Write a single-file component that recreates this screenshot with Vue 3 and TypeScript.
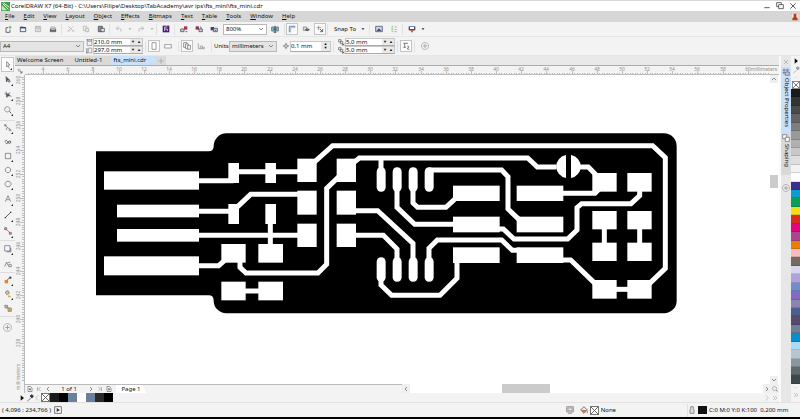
<script setup lang="ts">
import { h, ref, type FunctionalComponent } from 'vue'

type Shape = [d: string, stroke?: string, fill?: string]

const ink = '#4a4e58'
const soft = '#b4b4b4'

const icons: Record<string, Shape[]> = {
  logo: [['M0 0H12V12H0Z', 'none', '#43a047'], ['M2 2L10 10M3 1L11 7', '#fff'], ['M1 4L8 11H1Z', 'none', '#c8e6c9']],
  new: [['M3 4V11H9V7', ink], ['M3 4H6', ink], ['M9 1V6M6.500 3.500H11.500', '#4caf50']],
  open: [['M2 3H6L7 4H10V10H2Z', '#39406b'], ['M2 3H10V5H2Z', 'none', '#39406b']],
  save: [['M2 2H10V10H2Z', soft, '#ddd'], ['M4 2V5H8V2', soft]],
  print: [['M2 6H10V10H2Z', ink], ['M3 6V3H9V6', '#999'], ['M2 8.500H10', '#222']],
  cut: [['M2 2L9 9M9 2L2 9', soft], ['M1 9H4M8 9H11', soft]],
  copy: [['M2 2H7V8H2Z', soft], ['M5 5H10V10H5Z', soft, '#e6e6e6']],
  paste: [['M2 2H8V10H2Z', ink, '#8d8f96'], ['M6 5H11V10H6Z', ink, '#eee']],
  undo: [['M5 2L2 5L5 8M2 5H7Q10 5 9 10', soft]],
  redo: [['M7 2L10 5L7 8M10 5H5Q2 5 3 10', soft]],
  caret: [['M3 4.500H9L6 8Z', 'none', '#333']],
  caretSoft: [['M3 4.500H9L6 8Z', 'none', '#aaa']],
  search: [['M1 1H11V11H1Z', 'none', '#4a1f6e'], ['M4 3H8M4 6H8V9M4 3V9', '#e8dcf2']],
  importIcon: [['M6 2H11V7H6Z', 'none', '#b03050'], ['M1 6H6V10H1Z', ink, '#d3d6e8'], ['M8 10H11', ink]],
  exportIcon: [['M1 2H6V7H1Z', 'none', '#8b3550'], ['M6 6H11V10H6Z', ink, '#d3d6e8'], ['M8 3H9V6', ink]],
  publish: [['M1 3H6V8H1Z', 'none', '#39406b'], ['M5 5H11V10H5Z', ink, '#c9cde0'], ['M7 7L9 9', ink]],
  fullscreen: [['M1 3H11V9H1Z', '#567', '#9fbcc8'], ['M6 1V11M3 6H9', '#245'], ['M4 11H8', '#245']],
  rulers: [['M2 11V2H11', '#3b6aa0'], ['M4 11V4H11', '#9aabc0']],
  grid: [['M2 3H7V8H2Z', '#888', '#ddd'], ['M5 7Q8 4 11 7Q8 10 5 7Z', ink, '#777']],
  guides: [['M4 1V8M1 4H8', '#888'], ['M6 6L10 10M10 6V10H6', ink]],
  welcome: [['M1 2H11V10H1Z', '#556', '#cfd4e8'], ['M2 9L6 5L10 9Z', 'none', '#445078']],
  options: [['M3 2V10M3 2H5M3 6H5M3 10H5', '#7c8'], ['M7 3H10M7 7H10M7 10H10', '#999']],
  launcher: [['M1 2H11V8H1Z', 'none', '#3c5176'], ['M3 3H9V6H3Z', 'none', '#fff'], ['M4 8H8L6 11Z', '#d64b28', '#d64b28']],
  width: [['M2 4H10V11H2Z', '#888'], ['M2 1.500H10M2 0V3M10 0V3', ink]],
  height: [['M4 2H10V10H4Z', '#888'], ['M1.500 2V10M0 10H3', ink]],
  portrait: [['M3 1H9V11H3Z', '#888', '#fff']],
  landscape: [['M1 4H11V9H1Z', '#888', '#fff']],
  pages: [['M1 1H6V8H1Z', '#777'], ['M4 3H8V10H4Z', '#777', '#fff'], ['M7 5H11V11H7Z', '#777', '#fff']],
  onePage: [['M2 2V10H5M5 6H8V10H5ZM8 8H11V10H8Z', '#999']],
  nudge: [['M6 1L8 4H4ZM6 11L8 8H4ZM1 6L4 4V8ZM11 6L8 4V8Z', 'none', '#777'], ['M4 6H8', '#777']],
  dupX: [['M1 1H5V5H1ZM4 4H8V8H4Z', '#666'], ['M7 8L11 11M11 8L7 11', '#333']],
  treat: [['M2 2H9M4 2V8M2 8H6', '#666'], ['M8 6Q12 6 9 9Q6 11 11 11', '#666']],
  plus: [['M6 .700A5.300 5.300 0 1 1 5.900 .700Z', '#aaa'], ['M6 3V9M3 6H9', '#999']],
  plain: [['M6 2V10M2 6H10', '#aaa']],
  pick: [['M4 1V9L6 7L8 11M4 1L9 6H6', '#777', '#f4f4f4']],
  shape: [['M3 1L8 6H5L4 9Z', ink, ink], ['M7 7H9V9H7Z', '#666']],
  crop: [['M3 1L5 10M1 4L11 8M9 2L3 9', '#4b5566'], ['M4 4H8V8H4Z', 'none', '#4b5566']],
  zoom: [['M5 1A4 4 0 1 1 4.900 1Z', '#888', '#eee'], ['M8 8L11 11', '#444']],
  free: [['M2 2L5 5L3 9M5 5L9 8', '#777'], ['M1 1H3V3H1Z', '#777'], ['M8 8H10V10H8Z', '#777']],
  artistic: [['M1 5Q4 2 5 5T8 8Q11 8 10 5Q7 3 6 7Q4 10 2 7', '#444']],
  rect: [['M2 2H10V10H2Z', '#777']],
  ellipse: [['M6 2A4 4 0 1 1 5.900 2Z', '#777']],
  polygon: [['M4 2H8L11 6L8 10H4L1 6Z', '#777']],
  text: [['M2 10L6 1L10 10M4 7H8', '#777']],
  line: [['M2 10L10 2', '#333'], ['M1 9H3V11H1ZM9 1H11V3H9Z', 'none', '#333']],
  connector: [['M3 3L9 9', '#a56'], ['M1 1H4V4H1ZM8 8H11V11H8Z', '#866', '#caa']],
  shadow: [['M4 4H11V11H4Z', 'none', '#9297a4'], ['M1 1H9V9H1Z', '#778', '#f5f5fa']],
  transparency: [['M1 10L4 3L6 8M6 4Q9 2 9 5M7 7H11V10H7Z', '#777']],
  dropper: [['M1 6H6V11H1Z', 'none', '#f08020'], ['M5 6L9 2', '#334'], ['M8 1H11V4H8Z', 'none', '#334']],
  fill: [['M2 3L6 1L8 5L4 7Z', '#777', '#ccc'], ['M7 7L11 11H6Z', 'none', '#e8a020']],
  outline: [['M1 2L5 2L6 6L2 6Z', '#777', '#bbb'], ['M6 6H11V11H6Z', '#886', '#dca860']],
  min: [['M2 8.500H10', '#333']],
  restore: [['M1 1H8V7H1Z', '#444'], ['M4 4H11V10H4Z', '#444', '#fff']],
  close: [['M2 2L10 10M10 2L2 10', '#333']],
  closeSoft: [['M2 2L10 10M10 2L2 10', '#999']],
  user: [['M0 0H12V12H0Z', '#bbb', '#f4e5df'], ['M4 1H8V6L10 8V11H2V8L4 6Z', 'none', '#b8401f']],
  tri: [['M4 2L9 6L4 10Z', 'none', '#111']],
  pen: [['M2 11L7 6', '#557'], ['M6 3L9 6L11 3L9 1Z', '#223', '#334']],
  penSoft: [['M2 11L7 6', '#aaa'], ['M6 3L9 6L11 3L9 1Z', '#999', '#999']],
  left: [['M8 2L4 6L8 10', '#444']],
  right: [['M4 2L8 6L4 10', '#444']],
  up: [['M2 8L6 4L10 8', '#444']],
  down: [['M2 4L6 8L10 4', '#444']],
  leftSoft: [['M8 2L4 6L8 10', '#bbb']],
  rightSoft: [['M4 2L8 6L4 10', '#bbb']],
  downSoft: [['M2 4L6 8L10 4', '#bbb']],
  moreSoft: [['M3 3L6 6L3 9M6 3L9 6L6 9', '#bbb']],
  upSoft: [['M2 8L6 4L10 8', '#ccc']],
  first: [['M3 2V10M9 2L5 6L9 10', '#888']],
  last: [['M9 2V10M3 2L7 6L3 10', '#888']],
  addPage: [['M2 1H7L10 4V11H2Z', '#555', '#fff'], ['M6 4V9M4 6.500H8', '#333']],
  play: [['M1 1H11V11H1Z', '#555', '#fff'], ['M4 3L9 6L4 9Z', 'none', '#333']],
  none: [['M.500 .500H11.500V11.500H.500Z', '#555', '#fff'], ['M1 1L11 11M11 1L1 11', '#555']],
  proof: [['M1 1H11V9H1Z', '#888', '#cdd'], ['M3 3H9V7H3Z', '#a88', '#eee'], ['M3 11H9', '#888']],
  bucket: [['M6 1L11 6L6 11L1 6Z', '#555', '#eee'], ['M2 6H10L6 10Z', 'none', '#c07040'], ['M11 7V11', '#e07020']],
  nib: [['M4 1H8V4L9 6V11H3V6L4 4Z', '#777', '#ddd']],
  props: [['M1 3H11M1 7H11M3 1V10M8 1V10', '#6a7190'], ['M5 6H11V11H5Z', '#777', '#c9b9d6']],
  shaping: [['M1 1H7V7H1Z', '#777', '#fff'], ['M5 5H11V11H5Z', '#777', '#fff']],
}

const Glyph: FunctionalComponent<{ name: string }> = (props) =>
  h('svg', { viewBox: '0 0 12 12', 'aria-hidden': 'true' },
    icons[props.name].map(([d, stroke, fill]) => h('path', { d, stroke: stroke ?? 'none', fill: fill ?? 'none', 'stroke-width': 1.2 })))
Glyph.props = ['name']

const menus = ['File', 'Edit', 'View', 'Layout', 'Object', 'Effects', 'Bitmaps', 'Text', 'Table', 'Tools', 'Window', 'Help']
const toolGroups: string[][] = [
  ['pick', 'shape', 'crop', 'zoom'],
  ['free', 'artistic', 'rect', 'ellipse', 'polygon'],
  ['text', 'line', 'connector'],
  ['shadow', 'transparency'],
  ['dropper', 'fill', 'outline'],
]
const noFlyout = ['artistic', 'transparency', 'outline']
const documents = ['Welcome Screen', 'Untitled-1', 'fts_mini.cdr']
const activeDocument = ref('fts_mini.cdr')
const activeTool = ref('pick')

const palette = [
  '#1a1a1a', '#333333', '#4a4a4a', '#646464', '#7f7f7f', '#999999', '#b0b0b0', '#c8c8c8', '#dedede', '#f2f2f2', '#ffffff',
  '#3b2e8f', '#0a9fd0', '#0a9f56', '#f7dd12', '#dc2a1e', '#e2057f', '#ab4590', '#ef7d05', '#f8bcbc', '#76695f',
  '#d9d4f0', '#aea2dc', '#6f8ecd', '#8468c2', '#8d84b2', '#4a6090', '#574b6d', '#6d8097', '#0490cd', '#a9dbf6',
  '#b6c6d0', '#8a979e', '#5c6970', '#3d484c',
]
const documentColours = ['#1a1a1a', '#000000', '#6c7f9f', '#ffffff', '#6c7f9f', '#2b2b2b', '#000000']

const hMarks = Array.from({ length: 29 }, (_, i) => ({ value: 4 + i * 2, at: Math.round(18 + i * 25.17) }))
const vMarks = Array.from({ length: 12 }, (_, i) => ({ value: 260 - i * 2, at: Math.round(2 + i * 24.2) }))
const ticks = (n: number, step: number) => Array.from({ length: n }, (_, i) => Math.round(i * step))
const hTicks = ticks(295, 2.517).map((x) => `M${x + 3}.5 7V9`).join('')
const vTicks = ticks(126, 2.42).map((y) => `M7 ${y + 2}.5H9`).join('')

// Board geometry, in thirds of a screen pixel: [x1, y1, x2, y2]
const pads = [
  [42, 139, 327, 194], [81, 239, 327, 277], [81, 312, 327, 350], [42, 394, 327, 451],
  [415, 114, 447, 174], [526, 114, 558, 174], [415, 237, 447, 297], [526, 237, 558, 297],
  [394, 357, 467, 413], [505, 357, 579, 413], [394, 470, 467, 526], [505, 470, 579, 526],
  ...[622, 740].flatMap((x) => [[x, 101, x + 58, 171], [x, 197, x + 58, 269], [x, 296, x + 58, 366]]),
  ...[1089, 1280].flatMap((x) => [[x, 182, x + 140, 228], [x, 275, x + 140, 322], [x, 367, x + 140, 414]]),
  ...[1507, 1612].flatMap((x) => [[x, 144, x + 73, 200], [x, 258, x + 73, 313], [x, 353, x + 73, 408], [x, 465, x + 73, 521]]),
]
const pills = [873, 921, 969, 1017].flatMap((x) => [[x, 127], [x, 397]])
const traces = [
  '327,167 431,167', '440,140 640,140', '327,259 431,259', '431,256 482,208 640,208', '327,331 640,331',
  '541,290 541,365', '327,422 386,422 414,397', '450,405 450,427 468,444 684,444 710,418 710,190 750,152',
  '460,498 515,498', '672,112 728,62 1688,62 1726,98 1726,430 1672,482',
  '792,112 808,99 1313,99 1342,126 1400,126', '873,99 873,145', '1470,126 1495,126 1522,154',
  '1410,205 1515,205 1530,190', '1017,135 1235,135 1254,155 1254,252 1290,286',
  '969,185 969,234 983,247 1068,247 1100,217', '921,185 921,247 974,298 1095,298',
  '790,257 863,257 969,355 969,410', '790,331 880,331 921,372 921,410',
  '1017,410 1017,370 1042,345 1235,345 1267,376 1290,376',
  '873,455 873,480 905,511 1050,511 1101,460 1101,405',
  '1220,312 1240,312 1272,342 1433,342 1461,315 1461,248 1475,236 1623,236 1649,212 1649,190',
  '1543,305 1543,360', '1649,305 1649,360', '1410,405 1442,405 1518,478', '1570,493 1620,493',
]
</script>

<template>
  <div class="app">
    <header class="titlebar">
      <Glyph name="logo" class="logo" />
      <h1>CorelDRAW X7 (64-Bit) - C:\Users\Filipe\Desktop\TabAcademy\avr ips\fts_mini\fts_mini.cdr</h1>
      <div class="window-buttons">
        <button aria-label="Minimize"><Glyph name="min" /></button>
        <button aria-label="Restore"><Glyph name="restore" /></button>
        <button aria-label="Close"><Glyph name="close" /></button>
      </div>
    </header>

    <nav class="menubar">
      <button v-for="m in menus" :key="m"><u>{{ m[0] }}</u>{{ m.slice(1) }}</button>
      <button class="account" aria-label="Account"><Glyph name="user" /></button>
    </nav>

    <div class="toolbar">
      <button aria-label="New"><Glyph name="new" /></button>
      <button aria-label="Open"><Glyph name="open" /></button>
      <button aria-label="Save"><Glyph name="save" /></button>
      <button aria-label="Print"><Glyph name="print" /></button>
      <i class="sep" />
      <button aria-label="Cut"><Glyph name="cut" /></button>
      <button aria-label="Copy"><Glyph name="copy" /></button>
      <button aria-label="Paste"><Glyph name="paste" /></button>
      <i class="sep" />
      <button aria-label="Undo"><Glyph name="undo" /></button>
      <button class="narrow" aria-label="Undo list"><Glyph name="caretSoft" /></button>
      <button aria-label="Redo"><Glyph name="redo" /></button>
      <button class="narrow" aria-label="Redo list"><Glyph name="caretSoft" /></button>
      <i class="sep" />
      <button aria-label="Search content"><Glyph name="search" /></button>
      <i class="sep" />
      <button aria-label="Import"><Glyph name="importIcon" /></button>
      <button aria-label="Export"><Glyph name="exportIcon" /></button>
      <button aria-label="Publish to PDF"><Glyph name="publish" /></button>
      <span class="picker zoom-level"><select aria-label="Zoom level"><option>800%</option></select><Glyph name="down" /></span>
      <button class="wide" aria-label="Full screen preview"><Glyph name="fullscreen" /></button>
      <i class="sep" />
      <button class="boxed" aria-label="Show rulers"><Glyph name="rulers" /></button>
      <button class="wide" aria-label="Show grid"><Glyph name="grid" /></button>
      <button class="boxed" aria-label="Show guidelines"><Glyph name="guides" /></button>
      <i class="sep" />
      <button class="snap">Snap To <Glyph name="caret" /></button>
      <i class="sep" />
      <button aria-label="Welcome screen"><Glyph name="welcome" /></button>
      <button aria-label="Options"><Glyph name="options" /></button>
      <i class="sep" />
      <button aria-label="Application launcher"><Glyph name="launcher" /></button>
      <button class="narrow" aria-label="Launcher list"><Glyph name="caret" /></button>
    </div>

    <div class="toolbar props">
      <span class="picker page-size"><select aria-label="Page size"><option>A4</option></select><Glyph name="down" /></span>
      <div class="pair">
        <label><Glyph name="width" /><span class="spin"><input aria-label="Page width" value="210,0 mm"><button aria-label="Less">▼</button><button aria-label="More">▲</button></span></label>
        <label><Glyph name="height" /><span class="spin"><input aria-label="Page height" value="297,0 mm"><button aria-label="Less">▼</button><button aria-label="More">▲</button></span></label>
      </div>
      <i class="sep" />
      <button class="boxed" aria-label="Portrait"><Glyph name="portrait" /></button>
      <button class="wide" aria-label="Landscape"><Glyph name="landscape" /></button>
      <i class="sep" />
      <button class="boxed" aria-label="All pages"><Glyph name="pages" /></button>
      <button class="wide" aria-label="Current page"><Glyph name="onePage" /></button>
      <i class="sep" />
      <label class="units" for="units">Units:</label>
      <span class="picker unit-list"><select id="units"><option>millimeters</option></select><Glyph name="down" /></span>
      <label class="nudge"><Glyph name="nudge" /><span class="spin"><input aria-label="Nudge distance" value="0,1 mm"><span class="stack"><button aria-label="More">▲</button><button aria-label="Less">▼</button></span></span></label>
      <i class="sep" />
      <div class="pair">
        <label><Glyph name="dupX" /><span class="spin"><input aria-label="Duplicate distance X" value="5,0 mm"><button aria-label="Less">▼</button><button aria-label="More">▲</button></span></label>
        <label><Glyph name="dupX" /><span class="spin"><input aria-label="Duplicate distance Y" value="5,0 mm"><button aria-label="Less">▼</button><button aria-label="More">▲</button></span></label>
      </div>
      <i class="sep" />
      <button class="boxed" aria-label="Treat as filled"><Glyph name="treat" /></button>
      <i class="sep" />
      <button aria-label="Customize"><Glyph name="plus" /></button>
    </div>

    <main class="workspace">
      <aside class="toolbox">
        <div v-for="(group, i) in toolGroups" :key="i" class="tool-group" :class="'group-' + i">
          <button v-for="t in group" :key="t" :aria-label="t" :class="{ active: t === activeTool, flyout: !noFlyout.includes(t) }" @click="activeTool = t"><Glyph :name="t" /></button>
        </div>
        <button class="add-tool" aria-label="Customize toolbox"><Glyph name="plus" /></button>
      </aside>

      <section class="document">
        <div class="tabs">
          <button v-for="d in documents" :key="d" :class="{ active: d === activeDocument }" @click="activeDocument = d">{{ d }}</button>
          <button class="add" aria-label="New document"><Glyph name="plain" /></button>
        </div>
        <div class="view">
          <div class="corner"><Glyph name="guides" /></div>
          <svg class="ruler-h">
            <path :d="hTicks" class="tick" />
            <g v-for="m in hMarks" :key="m.value">
              <path :d="`M${m.at}.5 5V9`" class="tick" />
              <text :x="m.at" y="5">{{ m.value }}</text>
            </g>
            <text x="739" y="5">millimeters</text>
          </svg>
          <svg class="ruler-v">
            <path :d="vTicks" class="tick" />
            <g v-for="m in vMarks" :key="m.value">
              <path :d="`M5 ${m.at}.5H9`" class="tick" />
              <text :transform="`translate(5 ${Math.max(m.at, 5)}) rotate(-90)`">{{ m.value }}</text>
            </g>
            <text transform="translate(5 302) rotate(-90)">millimeters</text>
          </svg>
          <svg class="canvas" viewBox="0 0 745 309" role="img" aria-label="Circuit board artwork">
            <g transform="translate(65 50) scale(.33333)">
              <path class="board" d="M18 79H356Q371 79 371 64V62A38 38 0 0 1 409 25H1722A38 38 0 0 1 1760 63V527A38 38 0 0 1 1722 565H409A38 38 0 0 1 371 527Q371 511 356 511H18Z" />
              <rect v-for="(p, i) in pads" :key="'pad' + i" class="copper" :x="p[0]" :y="p[1]" :width="p[2] - p[0]" :height="p[3] - p[1]" />
              <rect v-for="(p, i) in pills" :key="'pill' + i" class="copper" :x="p[0] - 13" :y="p[1]" width="27" height="73" rx="13" />
              <path class="copper" d="M1428 90A35 35 0 0 0 1428 159ZM1443 90A35 35 0 0 1 1443 159Z" />
              <polyline v-for="t in traces" :key="t" class="trace" :points="t" />
            </g>
          </svg>
          <div class="scroll-v">
            <button aria-label="Scroll up"><Glyph name="up" /></button>
            <div class="track"><span class="thumb" /></div>
            <button aria-label="Scroll down"><Glyph name="down" /></button>
          </div>
          <div class="page-bar">
            <div class="page-nav">
              <button aria-label="Add page before"><Glyph name="addPage" /></button>
              <button aria-label="First page"><Glyph name="first" /></button>
              <button aria-label="Previous page"><Glyph name="left" /></button>
              <span class="count">1 of 1</span>
              <button aria-label="Next page"><Glyph name="right" /></button>
              <button aria-label="Last page"><Glyph name="last" /></button>
              <button aria-label="Add page after"><Glyph name="addPage" /></button>
              <button class="page-tab">Page 1</button>
            </div>
            <div class="scroll-h">
              <button aria-label="Scroll left"><Glyph name="left" /></button>
              <div class="track"><span class="thumb" /></div>
              <button aria-label="Scroll right"><Glyph name="right" /></button>
              <button aria-label="Navigator"><Glyph name="zoom" /></button>
            </div>
          </div>
        </div>
        <div class="doc-palette">
          <button aria-label="Palette menu"><Glyph name="tri" /></button>
          <button class="dropper" aria-label="Eyedropper"><Glyph name="pen" /></button>
          <button aria-label="Previous colours"><Glyph name="leftSoft" /></button>
          <button class="swatch" aria-label="No colour"><Glyph name="none" /></button>
          <button v-for="(c, i) in documentColours" :key="i" class="swatch" :aria-label="c" :style="{ background: c }" />
          <span class="fillspace" />
          <button aria-label="Next colours"><Glyph name="rightSoft" /></button>
          <button aria-label="Expand colours"><Glyph name="moreSoft" /></button>
        </div>
      </section>

      <aside class="dockers">
        <button class="close" aria-label="Close docker"><Glyph name="closeSoft" /></button>
        <button class="docker active"><Glyph name="props" /><span>Object Properties</span></button>
        <button class="docker"><Glyph name="shaping" /><span>Shaping</span></button>
        <button class="more" aria-label="Add docker"><Glyph name="plus" /></button>
      </aside>

      <aside class="palette">
        <button aria-label="Palette menu"><Glyph name="tri" /></button>
        <button aria-label="Eyedropper"><Glyph name="penSoft" /></button>
        <button class="small" aria-label="Scroll up"><Glyph name="upSoft" /></button>
        <button aria-label="No colour"><Glyph name="none" /></button>
        <div class="swatches"><button v-for="c in palette" :key="c" :aria-label="c" :style="{ background: c }" /></div>
        <button class="small" aria-label="Scroll down"><Glyph name="downSoft" /></button>
        <button class="end" aria-label="Expand palette"><Glyph name="moreSoft" /></button>
      </aside>
    </main>

    <footer class="status">
      <span class="coords">( 4,096 ; 234,766 )</span>
      <button aria-label="Macro"><Glyph name="play" /></button>
      <div class="fill-info">
        <Glyph name="proof" class="proof" /><Glyph name="bucket" /><Glyph name="none" class="chip" /><span>None</span>
      </div>
      <div class="pen-info">
        <Glyph name="nib" /><i class="ink" /><span>C:0 M:0 Y:0 K:100&nbsp; 0,200 mm</span>
      </div>
    </footer>
  </div>
</template>

<style>
body {
  margin: 0;
  background: #000;
}
</style>

<style scoped>
* {
  box-sizing: border-box;
}
.app {
  display: flex;
  flex-direction: column;
  height: 100vh;
  overflow: hidden;
  border-top: 1px solid #d8d8d8;
  border-bottom: 2px solid #000;
  background: #f3f3f3;
  color: #111;
  font: 6px/9px "Noto Sans", "Open Sans", sans-serif;
  white-space: nowrap;
}
button, input, select {
  margin: 0;
  padding: 0;
  border: 0;
  border-radius: 0;
  background: none;
  color: inherit;
  font: inherit;
}
button {
  display: flex;
  flex: none;
  align-items: center;
  justify-content: center;
}
svg {
  display: block;
  flex: none;
  width: 8px;
  height: 8px;
}
.titlebar {
  display: flex;
  flex: none;
  align-items: center;
  height: 10px;
  padding: 0 3px 0 1px;
  gap: 1px;
  background: #fff;
}
.titlebar h1 {
  flex: 1;
  margin: 0;
  font: inherit;
}
.titlebar .logo {
  width: 9px;
  height: 9px;
}
.window-buttons {
  display: flex;
  gap: 5px;
}
.menubar {
  display: flex;
  flex: none;
  align-items: center;
  height: 11px;
  padding-left: 5px;
  gap: 9px;
  background: #d6d6d6;
}
.menubar .account {
  margin-left: auto;
  margin-right: 1px;
}
.toolbar {
  display: flex;
  flex: none;
  align-items: center;
  height: 15px;
  border-bottom: 1px solid #e6e6e6;
}
.toolbar > button {
  width: 15px;
  height: 12px;
}
.toolbar > .narrow {
  width: 7px;
}
.toolbar > .narrow svg, .snap svg {
  width: 6px;
  height: 6px;
}
.toolbar > .wide {
  width: 16px;
}
.toolbar > .boxed {
  width: 12px;
  border: 1px solid #c4c4c4;
  background: #fbfbfb;
}
.toolbar > .snap {
  width: auto;
  gap: 4px;
  padding: 0 2px 0 5px;
}
.sep {
  flex: none;
  width: 1px;
  height: 11px;
  margin: 0 1px;
  background: #e2e2e2;
}
.picker {
  display: flex;
  flex: none;
  align-items: center;
  height: 11px;
  padding: 0 2px;
  border: 1px solid #b8b8b8;
  background: #e4e4e4;
}
.picker select {
  flex: 1;
  min-width: 0;
  height: 9px;
  appearance: none;
}
.picker svg {
  width: 6px;
  height: 6px;
}
.zoom-level {
  width: 44px;
  margin-left: 2px;
  background: #fff;
}
.page-size {
  width: 84px;
}
.unit-list {
  width: 48px;
}
.props {
  height: 19px;
}
.props .sep {
  margin: 0 2px;
}
.pair {
  display: flex;
  flex-direction: column;
  margin-left: 2px;
}
.pair label, .nudge {
  display: flex;
  align-items: center;
}
.pair svg {
  width: 7px;
  height: 7px;
}
.spin {
  display: flex;
  flex: none;
  width: 50px;
  height: 8px;
  border: 1px solid #c8c8c8;
  border-bottom-color: #aaa;
  background: #fff;
}
.spin input {
  flex: 1;
  min-width: 0;
  line-height: 7px;
}
.spin button {
  width: 6px;
  background: #e9e9e9;
  font-size: 4px;
  line-height: 4px;
}
.stack {
  display: flex;
  flex-direction: column;
}
.nudge {
  margin-left: 5px;
}
.nudge .spin {
  width: 41px;
  height: 11px;
}
.nudge input {
  line-height: 9px;
}
.stack button {
  flex: 1;
  width: 9px;
}
.units {
  width: 15px;
}
.workspace {
  display: flex;
  flex: 1;
  min-height: 0;
}
.toolbox {
  flex: none;
  width: 15px;
  padding-top: 1px;
}
.tool-group button {
  position: relative;
  width: 13px;
  height: 14px;
  margin-left: 1px;
}
.group-0 {
  padding-bottom: 3px;
  border-bottom: 1px solid #ddd;
}
.group-0 button {
  height: 15px;
}
.group-2 button {
  height: 16px;
}
.group-2, .group-3, .group-4 {
  padding-bottom: 1px;
  border-bottom: 1px solid #ddd;
}
.group-3 button {
  height: 15px;
}
.tool-group .active {
  border: 1px solid #c6c6c6;
  background: #fcfcfc;
}
.flyout::after {
  position: absolute;
  right: 1px;
  bottom: 1px;
  border: 1px solid #222;
  border-top-color: transparent;
  border-left-color: transparent;
  content: "";
}
.add-tool {
  width: 15px;
  height: 20px;
}
.add-tool svg {
  width: 9px;
  height: 9px;
}
.document {
  display: flex;
  flex: 1;
  flex-direction: column;
  min-width: 0;
}
.tabs {
  display: flex;
  flex: none;
  height: 10px;
  border-bottom: 1px solid #7cbcd6;
  background: #e9e9e9;
}
.tabs button {
  padding: 0 9px 0 2px;
  background: #dadada;
}
.tabs .active {
  background: #c9e2fb;
}
.tabs .add {
  width: 11px;
  padding: 0;
}
.view {
  display: grid;
  flex: 1;
  grid-template: "corner ruler ruler" 9px "side canvas scroll" 1fr "side page page" 9px / 10px 1fr 9px;
  min-height: 0;
}
.corner {
  grid-area: corner;
  display: grid;
  place-items: center;
}
.corner svg {
  width: 6px;
  height: 6px;
}
.ruler-h {
  grid-area: ruler;
  width: 100%;
  height: 9px;
  border-bottom: 1px solid #bbb;
}
.ruler-v {
  grid-area: side;
  width: 10px;
  height: 100%;
  border-right: 1px solid #bbb;
}
.ruler-h text, .ruler-v text {
  fill: #929292;
  font-size: 5px;
  text-anchor: middle;
}
.tick {
  stroke: #bdbdbd;
}
.canvas {
  grid-area: canvas;
  width: 100%;
  height: 100%;
  background: #fff;
}
.board {
  fill: #000;
}
.copper {
  fill: #fff;
}
.trace {
  fill: none;
  stroke: #fff;
  stroke-width: 15;
}
.scroll-v {
  grid-area: scroll;
  display: flex;
  flex-direction: column;
  background: #fff;
}
.scroll-v button {
  width: 8px;
  height: 8px;
  background: #efefef;
}
.scroll-v svg, .scroll-h svg, .page-nav svg {
  width: 6px;
  height: 6px;
}
.track {
  display: flex;
  flex: 1;
}
.scroll-v .track {
  align-items: flex-start;
  padding-top: 92px;
}
.thumb {
  flex: none;
  background: #cbcbcb;
}
.scroll-v .thumb {
  width: 8px;
  height: 13px;
}
.page-bar {
  grid-area: page;
  display: flex;
}
.page-nav {
  display: flex;
  flex: 1;
  border-top: 1px solid #bbb;
}
.page-nav button {
  width: 9px;
}
.page-nav .count {
  width: 34px;
  text-align: center;
}
.page-nav .page-tab {
  width: 30px;
  margin-left: 3px;
  background: #fff;
  clip-path: polygon(0 0, 27px 0, 100% 100%, 0 100%);
}
.scroll-h {
  display: flex;
  flex: 1;
  background: #fff;
}
.scroll-h button {
  width: 8px;
  background: #efefef;
}
.scroll-h .thumb {
  width: 48px;
  margin-left: 26%;
}
.doc-palette {
  display: flex;
  flex: none;
  height: 9px;
  padding-left: 3px;
  align-items: center;
}
.doc-palette button {
  width: 8px;
  height: 9px;
}
.doc-palette .dropper {
  width: 7px;
}
.doc-palette .swatch {
  width: 9px;
}
.doc-palette .swatch svg {
  width: 9px;
  height: 9px;
}
.fillspace {
  flex: 1;
}
.dockers {
  display: flex;
  flex: none;
  flex-direction: column;
  width: 12px;
  border-left: 2px solid #fafafa;
  background: #e7e7e7;
}
.dockers .close {
  height: 11px;
}
.dockers .close svg {
  width: 6px;
  height: 6px;
}
.docker {
  flex-direction: column;
  justify-content: flex-start;
  gap: 2px;
  height: 42px;
  padding-top: 1px;
  background: #d9d9d9;
}
.docker.active {
  height: 66px;
  background: #c9e0fb;
}
.docker span {
  writing-mode: vertical-rl;
}
.dockers .more {
  height: 26px;
}
.palette {
  display: flex;
  flex: none;
  flex-direction: column;
  width: 9px;
}
.palette > button {
  height: 9px;
}
.palette > .small {
  height: 6px;
}
.palette > .small svg {
  width: 5px;
  height: 5px;
}
.palette > .end {
  margin-bottom: 3px;
}
.swatches {
  display: flex;
  flex: 1;
  flex-direction: column;
}
.swatches button {
  flex: 1;
  border-bottom: 1px solid #0002;
}
.status {
  display: flex;
  flex: none;
  align-items: center;
  height: 15px;
  border-top: 1px solid #e2e2e2;
}
.coords {
  width: 54px;
  padding-left: 2px;
}
.fill-info, .pen-info {
  display: flex;
  align-items: center;
  height: 13px;
}
.fill-info {
  flex: 1;
  justify-content: flex-end;
  padding-right: 71px;
  gap: 2px;
}
.proof {
  margin-right: 4px;
}
.fill-info .chip {
  width: 9px;
  height: 9px;
}
.pen-info {
  width: 113px;
  gap: 2px;
  border-left: 1px solid #e0e0e0;
}
.ink {
  width: 9px;
  height: 8px;
  background: #111;
}
</style>
